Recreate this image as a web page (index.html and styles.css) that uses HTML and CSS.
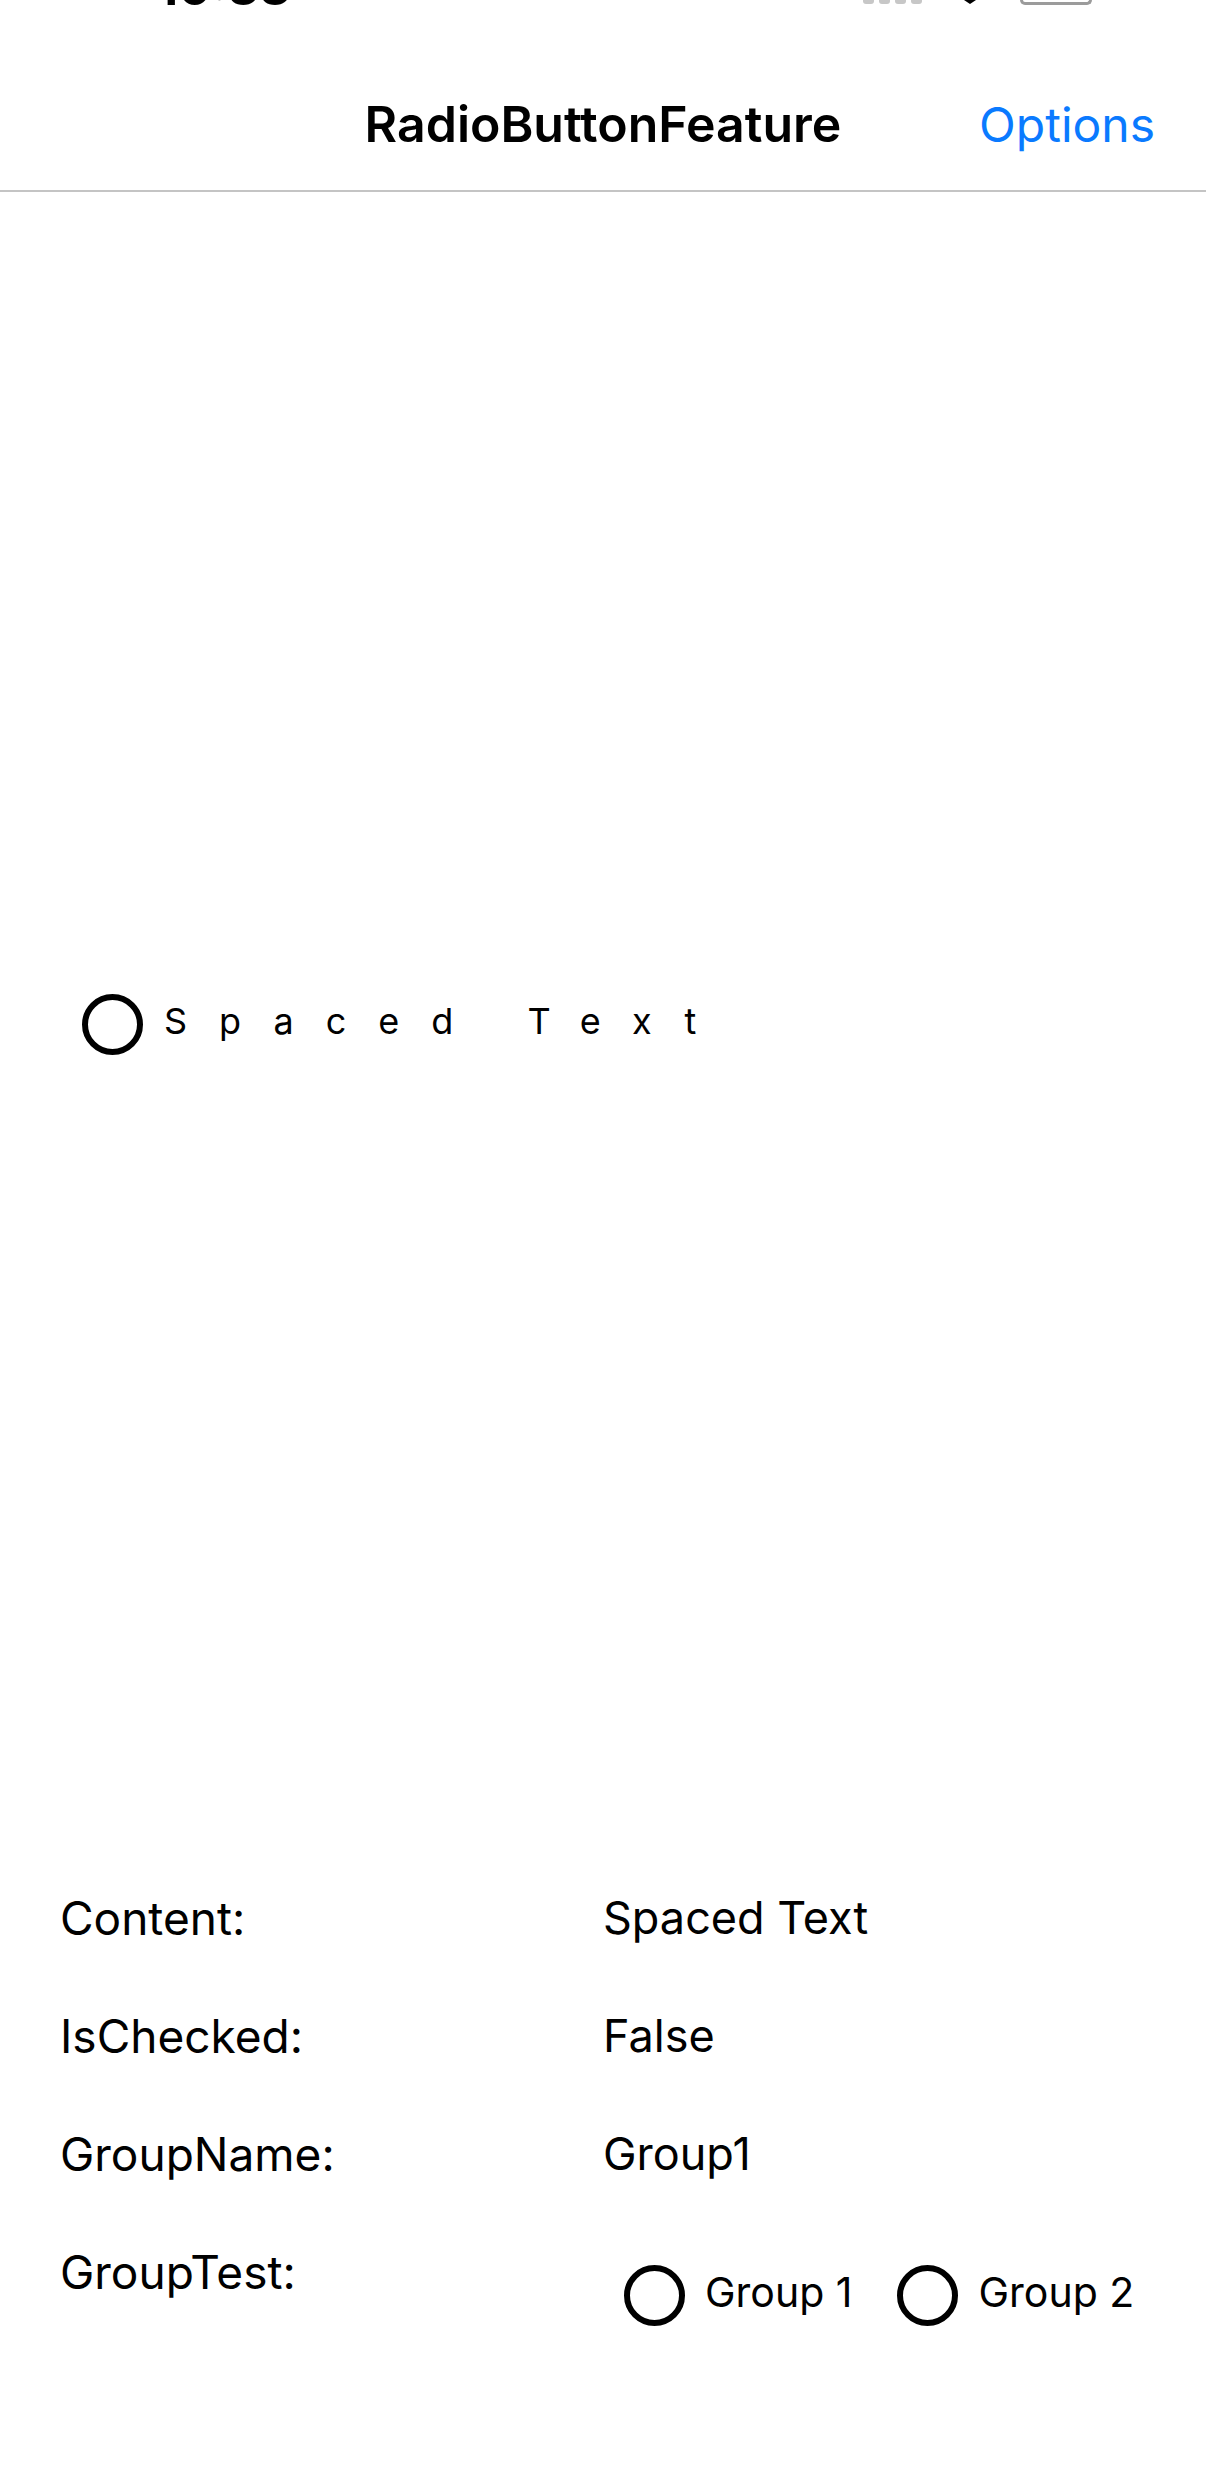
FILE: index.html
```html
<!DOCTYPE html>
<html lang="en">
<head>
    <meta charset="UTF-8">
    <meta name="viewport" content="width=device-width, initial-scale=1.0">
    <title>RadioButtonFeature</title>
    <link rel="stylesheet" href="styles.css">
</head>
<body>
    <div class="screen">
        <!-- Status bar (mostly cut off at the top) -->
        <div class="status-bar">
            <span class="status-time">10:33</span>
            <div class="status-icons">
                <div class="signal">
                    <span></span><span></span><span></span><span></span>
                </div>
                <svg class="wifi" width="12" height="4" viewBox="0 0 12 4">
                    <path d="M0 0 L12 0 L6 4 Z" fill="#000"/>
                </svg>
                <div class="battery"></div>
            </div>
        </div>

        <!-- Navigation bar -->
        <header class="nav-bar">
            <span></span>
            <h1 class="nav-title">RadioButtonFeature</h1>
            <a class="nav-action" href="#">Options</a>
        </header>

        <main class="demo-area">
            <label class="radio radio-spaced">
                <span class="radio-circle"></span>
                <span class="radio-text">Spaced Text</span>
            </label>
        </main>

        <section class="details">
            <div class="detail-label">Content:</div>
            <div class="detail-value">Spaced Text</div>

            <div class="detail-label">IsChecked:</div>
            <div class="detail-value">False</div>

            <div class="detail-label">GroupName:</div>
            <div class="detail-value">Group1</div>

            <div class="detail-label">GroupTest:</div>
            <div class="group-test">
                <label class="radio radio-small">
                    <span class="radio-circle"></span>
                    <span class="radio-text">Group 1</span>
                </label>
                <label class="radio radio-small">
                    <span class="radio-circle"></span>
                    <span class="radio-text">Group 2</span>
                </label>
            </div>
        </section>
    </div>
</body>
</html>
```

FILE: styles.css
```css
body {
    margin: 0;
    background: #fff;
    font-family: Inter, "Noto Sans", sans-serif;
    color: #000;
}

.screen {
    width: 1206px;
    height: 2472px;
    display: flex;
    flex-direction: column;
    overflow: hidden;
}

/* Status bar */
.status-bar {
    height: 58px;
    flex-shrink: 0;
    display: flex;
    justify-content: space-between;
    align-items: flex-start;
    padding: 0 114px 0 157px;
    overflow: hidden;
}

.status-time {
    font-size: 49px;
    font-weight: 700;
    line-height: 49px;
    margin-top: -37px;
}

.status-icons {
    display: flex;
    align-items: flex-start;
    gap: 44px;
}

.signal {
    display: flex;
    gap: 5px;
}

.signal span {
    width: 11px;
    height: 4px;
    background: #c7c7c7;
    border-radius: 0 0 3px 3px;
}

.wifi {
    display: block;
    margin-left: -2px;
}

.battery {
    width: 72px;
    height: 5px;
    box-sizing: border-box;
    border: 3px solid #9b9b9b;
    border-top: none;
    border-radius: 0 0 12px 12px;
}

/* Navigation bar */
.nav-bar {
    height: 132px;
    flex-shrink: 0;
    display: grid;
    grid-template-columns: 1fr auto 1fr;
    align-items: center;
    padding: 0 51px;
    border-bottom: 2px solid #c4c4c4;
}

.nav-title {
    margin: 0;
    font-size: 50px;
    font-weight: 600;
}

.nav-action {
    justify-self: end;
    font-size: 48px;
    color: #0a7aff;
    text-decoration: none;
}

/* Radio buttons */
.radio {
    display: flex;
    align-items: center;
}

.radio-circle {
    flex-shrink: 0;
    box-sizing: border-box;
    width: 61px;
    height: 61px;
    border: 6px solid #000;
    border-radius: 50%;
}

.demo-area {
    flex: 1;
    display: flex;
    align-items: center;
    padding-left: 82px;
}

.radio-spaced {
    gap: 21px;
}

.radio-spaced .radio-text {
    font-size: 36px;
    letter-spacing: 32px;
    padding-bottom: 8px;
}

.radio-small {
    gap: 20px;
}

.radio-small .radio-text {
    font-size: 41px;
    padding-bottom: 6px;
}

/* Details grid */
.details {
    flex-shrink: 0;
    display: grid;
    grid-template-columns: 1fr 1fr;
    row-gap: 62px;
    padding: 33px 60px 146px;
    font-size: 46px;
    line-height: 56px;
}

.detail-value {
    font-size: 45px;
}

.group-test {
    display: flex;
    gap: 45px;
    padding: 20px 0 0 21px;
}
```
